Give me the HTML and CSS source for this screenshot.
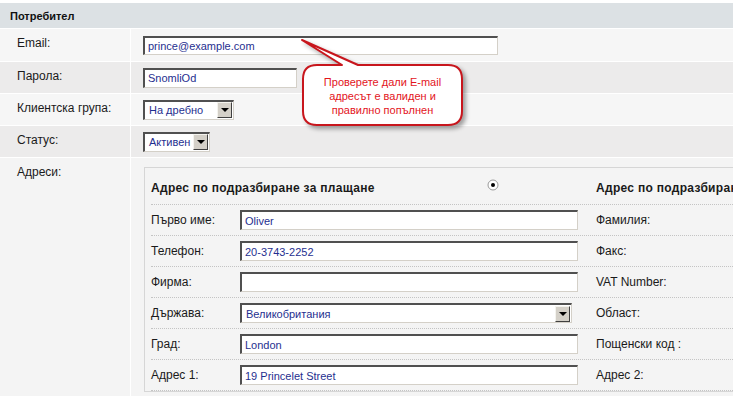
FILE: index.html
```html
<!DOCTYPE html>
<html lang="bg">
<head>
    <meta charset="UTF-8">
    <title>Потребител</title>
    <link rel="stylesheet" href="styles.css">
</head>
<body>
<div class="page">
    <div class="section-title">Потребител</div>

    <div class="row">
        <div class="label">Email:</div>
        <div class="field"><input class="text email" type="text" value="prince@example.com"></div>
    </div>
    <div class="row alt">
        <div class="label">Парола:</div>
        <div class="field"><input class="text password" type="text" value="SnomliOd"></div>
    </div>
    <div class="row">
        <div class="label">Клиентска група:</div>
        <div class="field">
            <div class="select group"><span>На дребно</span><span class="arrow"></span></div>
        </div>
    </div>
    <div class="row alt">
        <div class="label">Статус:</div>
        <div class="field">
            <div class="select status"><span>Активен</span><span class="arrow"></span></div>
        </div>
    </div>
    <div class="row addresses">
        <div class="label">Адреси:</div>
        <div class="field">
            <div class="address-box">
                <div class="addr-head">
                    <div class="addr-title">
                        <b>Адрес по подразбиране за плащане</b>
                        <svg class="radio" width="12" height="12" viewBox="0 0 12 12">
                            <circle cx="6" cy="6" r="5" fill="#fff" stroke="#9a9a9a"/>
                            <circle cx="6" cy="6" r="2" fill="#000"/>
                        </svg>
                    </div>
                    <b class="addr-title2">Адрес по подразбиране за доставка</b>
                </div>
                <div class="addr-row">
                    <div class="addr-label">Първо име:</div>
                    <input class="text addr" type="text" value="Oliver">
                    <div class="addr-label2">Фамилия:</div>
                </div>
                <div class="addr-row">
                    <div class="addr-label">Телефон:</div>
                    <input class="text addr" type="text" value="20-3743-2252">
                    <div class="addr-label2">Факс:</div>
                </div>
                <div class="addr-row">
                    <div class="addr-label">Фирма:</div>
                    <input class="text addr" type="text" value="">
                    <div class="addr-label2">VAT Number:</div>
                </div>
                <div class="addr-row">
                    <div class="addr-label">Държава:</div>
                    <div class="select country"><span>Великобритания</span><span class="arrow"></span></div>
                    <div class="addr-label2 after-select">Област:</div>
                </div>
                <div class="addr-row">
                    <div class="addr-label">Град:</div>
                    <input class="text addr" type="text" value="London">
                    <div class="addr-label2">Пощенски код :</div>
                </div>
                <div class="addr-row">
                    <div class="addr-label">Адрес 1:</div>
                    <input class="text addr" type="text" value="19 Princelet Street">
                    <div class="addr-label2">Адрес 2:</div>
                </div>
            </div>
        </div>
    </div>

    <div class="hint">
        <svg class="hint-bubble" width="180" height="100" viewBox="0 0 180 100">
            <path d="M8,44 Q8,30 22,30 L47,30 L7,5 L63,30 L153,30 Q167,30 167,44 L167,76 Q167,90 153,90 L22,90 Q8,90 8,76 Z"
                  fill="#fff" stroke="#c8161d" stroke-width="2" stroke-linejoin="round"/>
        </svg>
        <p class="hint-text">Проверете дали E-mail<br>адресът е валиден и<br>правилно попълнен</p>
    </div>
</div>
</body>
</html>
```

FILE: styles.css
```css
html, body {
    margin: 0;
    height: 100%;
    overflow: hidden;
    background: #fff;
}
body {
    font-family: "Liberation Sans", Arial, sans-serif;
    font-size: 12px;
    color: #1a1a1a;
}
.page {
    position: relative;
    padding-top: 3px;
    width: 900px;
}
.section-title {
    height: 25px;
    display: flex;
    align-items: center;
    padding-left: 10px;
    background-color: #dce1e4;
    font-size: 11px;
    font-weight: bold;
    color: #111;
}
.row {
    display: grid;
    grid-template-columns: 130px 1fr;
    column-gap: 1px;
    margin-top: 1px;
    height: 31px;
}
.row:nth-child(2) {
    height: 32px;
}
.row > div {
    background-color: #f6f6f6;
}
.row.alt > div {
    background-color: #ecebeb;
}
.row.addresses {
    height: auto;
    min-height: 240px;
}
.row.addresses > div {
    background-color: #f4f4f4;
}
.label {
    padding: 7px 0 0 17px;
}
.field {
    display: flex;
    align-items: center;
    padding-left: 12px;
}
.addresses .field {
    align-items: flex-start;
    padding: 9px 0 0 13px;
}

/* inputs */
.text {
    box-sizing: border-box;
    height: 20px;
    margin: 0;
    padding: 0 3px;
    border-style: solid;
    border-width: 2px 1px 1px 2px;
    border-color: #505050 #d4d0c8 #d4d0c8 #505050;
    background: #fff;
    font-family: "Liberation Sans", Arial, sans-serif;
    font-size: 11px;
    color: #1f2f8f;
    outline: none;
}
.email {
    width: 355px;
    height: 19px;
}
.password {
    width: 154px;
}
.addr {
    width: 338px;
}
.select {
    box-sizing: border-box;
    display: flex;
    align-items: center;
    justify-content: space-between;
    height: 20px;
    padding-left: 4px;
    border-style: solid;
    border-width: 2px 1px 1px 2px;
    border-color: #505050 #d4d0c8 #d4d0c8 #505050;
    background: #fff;
    font-size: 11px;
    color: #1f2f8f;
}
.select .arrow {
    position: relative;
    box-sizing: border-box;
    width: 15px;
    height: 16px;
    margin-right: 1px;
    background: #d4d0c8;
    border-style: solid;
    border-width: 1px;
    border-color: #f4f3ee #404040 #404040 #f4f3ee;
}
.select .arrow::after {
    content: "";
    position: absolute;
    left: 3px;
    top: 5px;
    border-left: 4px solid transparent;
    border-right: 4px solid transparent;
    border-top: 4px solid #000;
}
.group {
    width: 91px;
}
.status {
    width: 67px;
    padding-left: 4px;
}
.country {
    width: 332px;
}

/* address box */
.address-box {
    width: 700px;
    border: 1px solid #d6d6d6;
    padding: 0 6px;
    background: #f4f4f4;
}
.addr-head {
    box-sizing: border-box;
    height: 37px;
    padding-top: 4px;
    display: flex;
    align-items: center;
    border-bottom: 1px dotted #c4c4c4;
}
.addr-head b {
    font-size: 12px;
    letter-spacing: 0.3px;
}
.addr-title {
    width: 427px;
    display: flex;
    align-items: center;
    justify-content: space-between;
}
.radio {
    margin: 0 79px 6px 0;
}
.addr-title2 {
    margin-left: 18px;
    white-space: nowrap;
}
.addr-row {
    box-sizing: border-box;
    height: 31px;
    display: flex;
    align-items: center;
    border-bottom: 1px dotted #c4c4c4;
}
.addr-label {
    width: 89px;
}
.addr-label2 {
    margin-left: 18px;
    white-space: nowrap;
}
.addr-label2.after-select {
    margin-left: 24px;
}

/* tooltip */
.hint {
    position: absolute;
    left: 295px;
    top: 35px;
    width: 180px;
    height: 100px;
}
.hint-bubble {
    display: block;
    filter: drop-shadow(3px 3px 2px rgba(0, 0, 0, 0.35));
}
.hint-text {
    position: absolute;
    left: 8px;
    top: 40px;
    width: 159px;
    margin: 0;
    text-align: center;
    font-size: 11px;
    line-height: 14px;
    color: #e3141c;
}
```
